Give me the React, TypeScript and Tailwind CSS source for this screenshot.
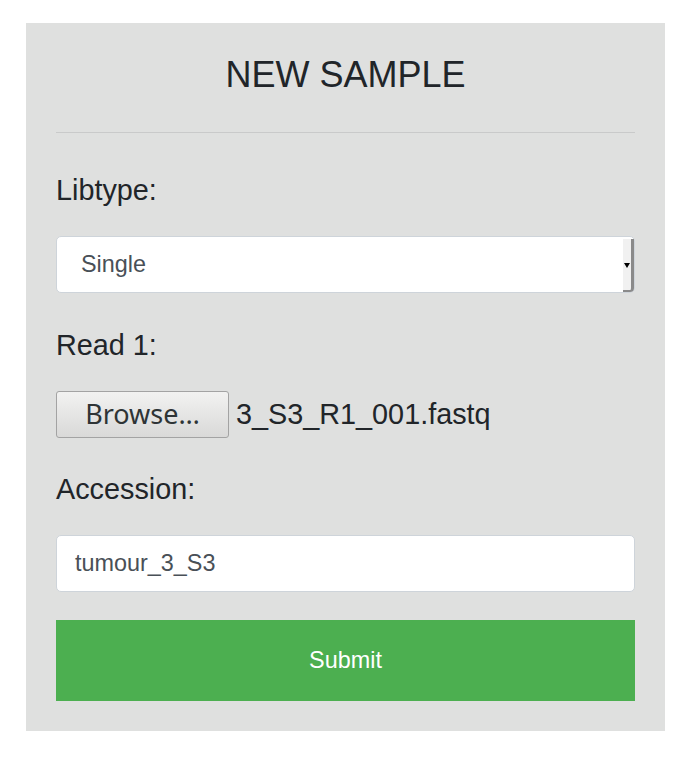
const labelClass = 'h-[35px] leading-[35px] text-[28.8px] text-[#212529]';

function Label({ children }: { children: React.ReactNode }) {
  return <div className={labelClass}>{children}</div>;
}

export default function App() {
  return (
    <div className="min-h-screen bg-white pt-[23px] pl-[26px] font-['Liberation_Sans',Arial,sans-serif]">
      <div className="w-[639px] bg-[#dfe0df] px-[30px] pt-[30px] pb-[30px]">
        {/* Header */}
        <h1 className="h-[43px] text-center text-[36px] leading-[43px] text-[#212529]">NEW SAMPLE</h1>
        <div className="mt-[36px] h-px bg-[#c9caca]" />

        {/* Libtype */}
        <div className="mt-[40px]">
          <Label>Libtype:</Label>
        </div>
        <div className="mt-[28px] flex h-[57px] items-stretch rounded-[5px] border border-[#ced4da] bg-white">
          <div className="flex flex-1 items-center pl-[24px] text-[23.4px] text-[#495057]">Single</div>
          <div className="relative mt-[2px] w-[11px] rounded-br-[4px] border-r-[3px] border-b-[2px] border-[#8a8a8a] bg-[#f1f1f1]">
            <div className="absolute top-[24px] left-[1px] h-0 w-0 border-x-[3px] border-t-[5px] border-x-transparent border-t-black" />
          </div>
        </div>

        {/* Read 1 */}
        <div className="mt-[35px]">
          <Label>Read 1:</Label>
        </div>
        <div className="mt-[28px] flex items-center gap-[7px]">
          <button
            type="button"
            className="h-[47px] w-[173px] rounded-[3px] border border-[#a3a3a3] bg-gradient-to-b from-[#f2f2f1] to-[#d9d9d8] font-['Noto_Sans',sans-serif] text-[27px] text-[#2e3436]"
          >
            Browse…
          </button>
          <span className="text-[28.8px] text-[#212529]">3_S3_R1_001.fastq</span>
        </div>

        {/* Accession */}
        <div className="mt-[34px]">
          <Label>Accession:</Label>
        </div>
        <div className="mt-[28px] flex h-[57px] items-center rounded-[5px] border border-[#ced4da] bg-white pl-[18px] text-[23.4px] text-[#495057]">
          tumour_3_S3
        </div>

        <button
          type="button"
          className="mt-[28px] h-[81px] w-full bg-[#4caf50] text-[23.4px] text-white"
        >
          Submit
        </button>
      </div>
    </div>
  );
}
